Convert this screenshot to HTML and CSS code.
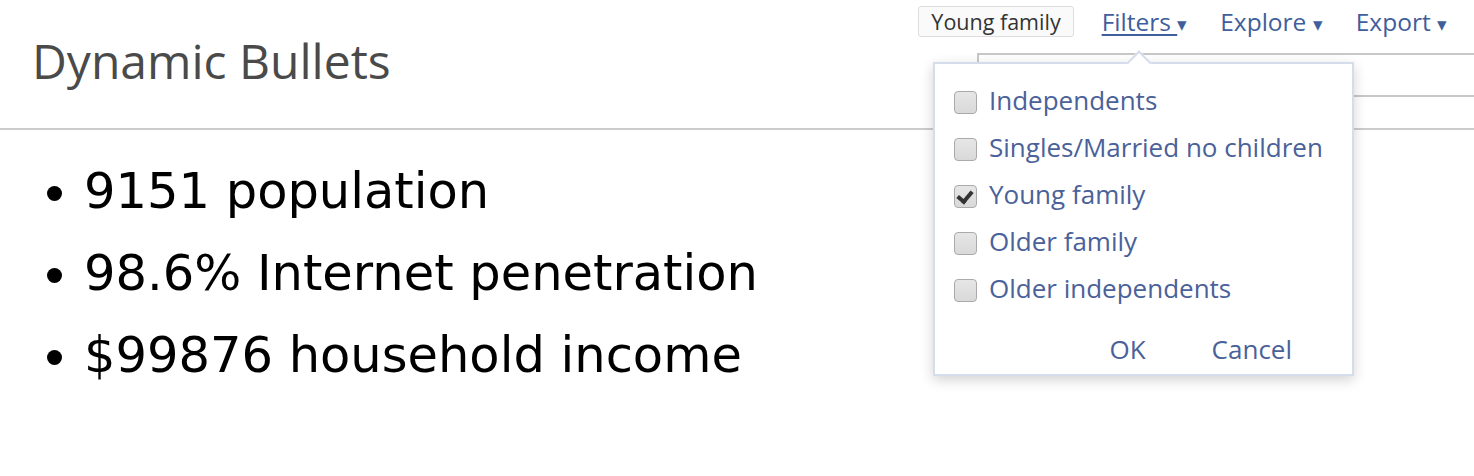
FILE: index.html
```html
<!DOCTYPE html>
<html lang="en">

<head>
    <meta charset="UTF-8">
    <title>Dynamic Bullets</title>
    <link rel="stylesheet" href="styles.css">
</head>

<body>

    <div class="header">
        <h1 class="title">Dynamic Bullets</h1>
        <div class="side">
            <div class="nav">
                <span class="chip">Young family</span>
                <a class="menu active">Filters <span class="caret">&#9662;</span></a>
                <a class="menu">Explore <span class="caret">&#9662;</span></a>
                <a class="menu">Export <span class="caret">&#9662;</span></a>
            </div>
            <div class="panel"></div>
        </div>

        <div class="popup">
            <div class="arrow"></div>
            <label class="option"><span class="box"></span>Independents</label>
            <label class="option"><span class="box"></span>Singles/Married no children</label>
            <label class="option"><span class="box checked"></span>Young family</label>
            <label class="option"><span class="box"></span>Older family</label>
            <label class="option"><span class="box"></span>Older independents</label>
            <div class="actions">
                <a>OK</a>
                <a>Cancel</a>
            </div>
        </div>
    </div>

    <ul class="bullets">
        <li>9151 population</li>
        <li>98.6% Internet penetration</li>
        <li>$99876 household income</li>
    </ul>

</body>

</html>
```

FILE: styles.css
```css
body {
    margin: 0;
    background: #fff;
    font-family: "Open Sans", sans-serif;
}

.header {
    position: relative;
    display: flex;
    justify-content: space-between;
    height: 128px;
    border-bottom: 2px solid #ccc;
}

.title {
    margin: 31px 0 0 32px;
    font-size: 48px;
    font-weight: normal;
    color: #4a4a4a;
    line-height: 60px;
}

.side {
    display: flex;
    flex-direction: column;
    align-items: flex-end;
}

.nav {
    display: flex;
    align-items: center;
    gap: 28px;
    padding: 5px 27px 0 0;
    height: 32px;
}

.menu + .menu {
    margin-left: 5px;
}

.chip {
    font-size: 21.5px;
    color: #333;
    background: #fafafa;
    border: 1px solid #ddd;
    border-radius: 3px;
    padding: 0 12px;
    line-height: 29px;
}

.menu {
    font-size: 24.5px;
    color: #3f5e9c;
    text-decoration: none;
    white-space: nowrap;
}

.menu.active {
    text-decoration: underline;
    text-underline-offset: 3px;
}

.caret {
    display: inline-block;
    font-size: 19px;
}

.panel {
    margin-top: 16px;
    width: 495px;
    height: 40px;
    border-top: 2px solid #c8c8c8;
    border-bottom: 2px solid #c8c8c8;
    border-left: 2px solid #c8c8c8;
}

.popup {
    position: absolute;
    left: 933px;
    top: 62px;
    width: 417px;
    height: 310px;
    background: #fff;
    border: 2px solid #d5ddec;
    box-shadow: 0 4px 12px rgba(0, 0, 0, 0.18);
}

.arrow {
    position: absolute;
    left: 195px;
    top: -10px;
    width: 16px;
    height: 16px;
    background: #fff;
    border-top: 2px solid #d5ddec;
    border-left: 2px solid #d5ddec;
    transform: rotate(45deg);
}

.option {
    display: flex;
    align-items: center;
    gap: 12px;
    height: 47px;
    padding-left: 19px;
    font-size: 26px;
    color: #4a6199;
}

.option:first-of-type {
    margin-top: 12px;
}

.box {
    width: 21px;
    height: 21px;
    border: 1px solid #aaa;
    border-radius: 4px;
    background: linear-gradient(#e6e6e6, #d9d9d9);
    position: relative;
    top: 3px;
}

.box.checked::after {
    content: "";
    position: absolute;
    left: 5px;
    top: 2px;
    width: 6px;
    height: 11px;
    border: solid #333;
    border-width: 0 4px 4px 0;
    transform: rotate(40deg);
}

.actions {
    display: flex;
    justify-content: flex-end;
    gap: 66px;
    padding: 20px 60px 0 0;
    font-size: 26px;
    color: #4a6199;
}

.bullets {
    margin: 20px 0 0 0;
    padding-left: 84px;
    font-family: "DejaVu Sans", sans-serif;
    font-size: 49.5px;
    line-height: 82px;
    color: #000;
}
```
